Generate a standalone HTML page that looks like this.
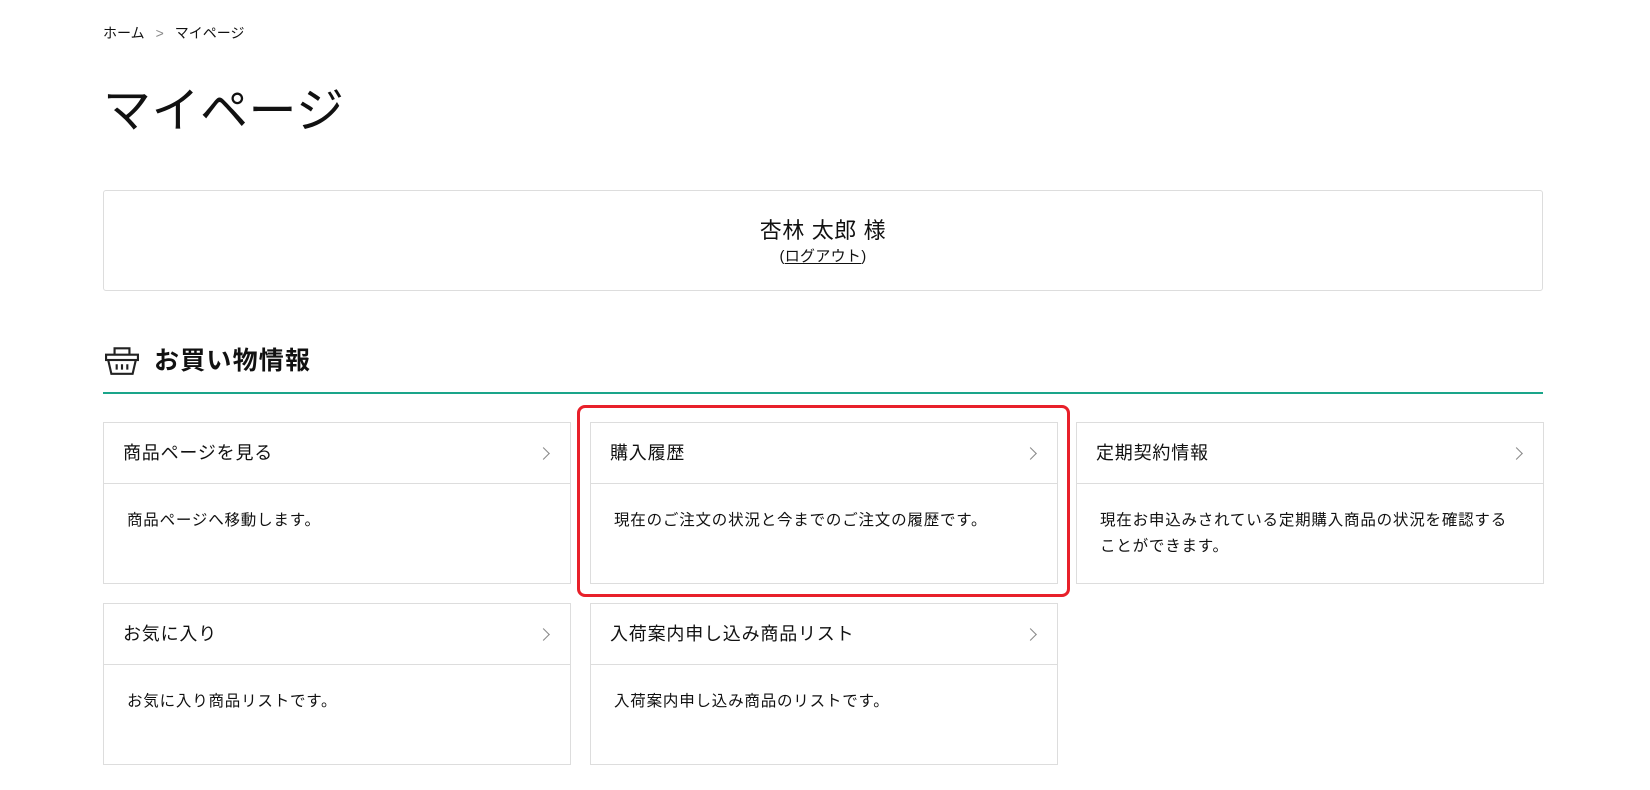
<!DOCTYPE html>
<html><head><meta charset="utf-8"><style>
*{margin:0;padding:0;box-sizing:border-box}
body{width:1650px;height:790px;background:#fff;font-family:"Liberation Sans","Noto Sans CJK JP",sans-serif;color:#111;position:relative;overflow:hidden}
.a{position:absolute}
.bc{left:103px;top:23px;font-size:14px}
.bc span{color:#888;margin:0 11px}
h1{position:absolute;left:103px;top:82px;font-size:48px;font-weight:400;line-height:59px;letter-spacing:0.5px}
.user{left:103px;top:190px;width:1440px;height:101px;border:1px solid #ddd;border-radius:3px;text-align:center}
.user .n{font-size:22px;margin-top:24px;line-height:31px;letter-spacing:0.6px}
.user .l{font-size:15px;line-height:21px;letter-spacing:0.3px}
.user .l u{text-underline-offset:2px}
.sec{left:103px;top:343px;width:1440px;height:51px;border-bottom:2px solid #1aa58a}
.sec h2{position:absolute;left:51px;top:0;font-size:25px;font-weight:700;line-height:36px;letter-spacing:1.2px}
.card{position:absolute;width:468px;height:162px;border:1px solid #ddd}
.card .h{height:61px;border-bottom:1px solid #ddd;font-size:18px;line-height:61px;padding-left:19px;position:relative;letter-spacing:0.8px}
.card .h:after{content:"";position:absolute;right:22px;top:26px;width:8px;height:8px;border-top:1px solid #888;border-right:1px solid #888;transform:rotate(45deg)}
.card .b{font-size:15.5px;line-height:26px;padding:24px 20px 0 23px;letter-spacing:0.8px}
.red{left:577px;top:405px;width:493px;height:192px;border:3px solid #e8202a;border-radius:8px}
</style></head><body>
<div class="a bc">ホーム<span>&gt;</span>マイページ</div>
<h1>マイページ</h1>
<div class="a user"><div class="n">杏林 太郎 様</div><div class="l">(<u>ログアウト</u>)</div></div>
<div class="a sec">
<svg class="a" style="left:2px;top:1px" width="34" height="32" viewBox="0 0 32 30" fill="none" stroke="#222" stroke-width="2">
<path d="M9 10V4h14v6"/><rect x="1" y="10" width="30" height="5"/><path d="M3 15l3 13h20l3-13"/><path d="M11 19v5M16 19v5M21 19v5"/></svg>
<h2>お買い物情報</h2></div>
<div class="card" style="left:103px;top:422px"><div class="h">商品ページを見る</div><div class="b">商品ページへ移動します。</div></div>
<div class="card" style="left:590px;top:422px"><div class="h">購入履歴</div><div class="b">現在のご注文の状況と今までのご注文の履歴です。</div></div>
<div class="card" style="left:1076px;top:422px"><div class="h">定期契約情報</div><div class="b">現在お申込みされている定期購入商品の状況を確認する<br>ことができます。</div></div>
<div class="card" style="left:103px;top:603px"><div class="h">お気に入り</div><div class="b">お気に入り商品リストです。</div></div>
<div class="card" style="left:590px;top:603px"><div class="h">入荷案内申し込み商品リスト</div><div class="b">入荷案内申し込み商品のリストです。</div></div>
<div class="a red"></div>
</body></html>
